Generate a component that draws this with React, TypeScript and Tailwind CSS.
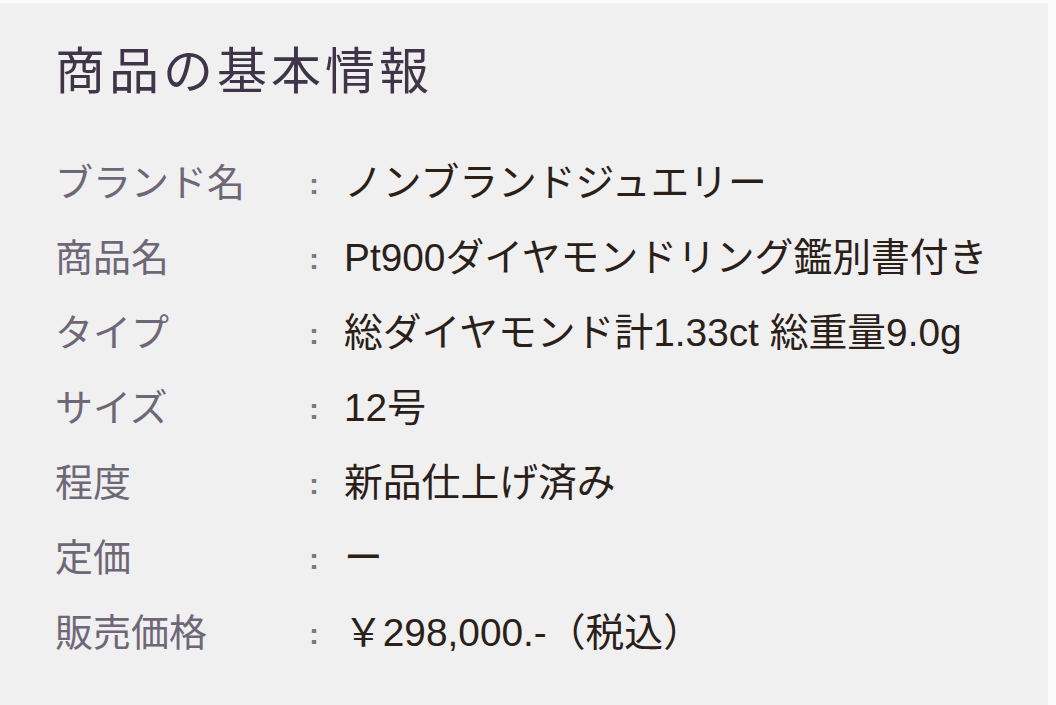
import React from "react";

const rows: [string, string][] = [
  ["ブランド名", "ノンブランドジュエリー"],
  ["商品名", "Pt900ダイヤモンドリング鑑別書付き"],
  ["タイプ", "総ダイヤモンド計1.33ct 総重量9.0g"],
  ["サイズ", "12号"],
  ["程度", "新品仕上げ済み"],
  ["定価", "ー"],
  ["販売価格", "￥298,000.-（税込）"],
];

export default function App() {
  return (
    <div
      className="w-[1056px] h-[705px] bg-[#fbfbfb] pt-[3px] pr-[8px] overflow-hidden"
      style={{ fontFamily: '"Liberation Sans", "Noto Sans CJK JP", sans-serif' }}
    >
      <div className="h-full bg-[#f0f0f0] pl-[55px] pt-[39px]">
        <h1 className="text-[50px] leading-[60px] text-[#3e3549] tracking-[4px]">
          商品の基本情報
        </h1>
        <div className="mt-[44px] flex flex-col">
          {rows.map(([k, v]) => (
            <div key={k} className="flex items-center h-[75px]">
              <div className="w-[254px] text-[38px] text-[#6e6777] whitespace-nowrap">{k}</div>
              <div className="w-[35px] text-[#7a7781] text-[30px] font-bold">:</div>
              <div className="text-[38.8px] text-[#2a2018] whitespace-nowrap">{v}</div>
            </div>
          ))}
        </div>
      </div>
    </div>
  );
}
